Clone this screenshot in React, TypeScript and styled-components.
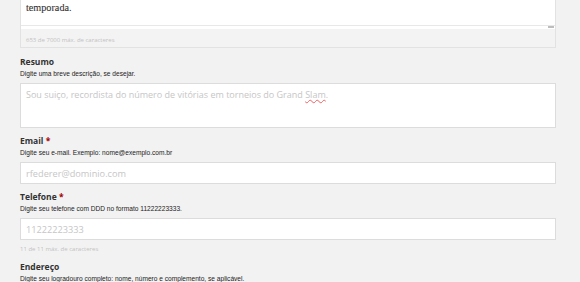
import styled, { createGlobalStyle } from "styled-components";

const GlobalStyle = createGlobalStyle`
  html, body {
    margin: 0;
    padding: 0;
    background: #f2f2f2;
  }
  * {
    box-sizing: border-box;
  }
`;

const Form = styled.form`
  width: 556px;
  padding-left: 20px;
  font-family: "Open Sans", "Liberation Sans", sans-serif;
  color: #333;
`;

const EditorPanel = styled.div`
  border: 1px solid #e2e2e2;
  border-top: none;
  background: #f3f3f3;
  margin-bottom: 8px;
`;

const EditorBody = styled.div`
  height: 25px;
  padding: 0 5px;
  background: #fff;
  overflow: hidden;
  font-family: "Liberation Serif", "DejaVu Serif", serif;
  font-size: 10.2px;
  line-height: 15px;
  color: #333;
  -webkit-text-stroke: 0.1px #333;
`;

const ResizeBar = styled.div`
  height: 4px;
  background: #fff;
  border-top: 1px solid #e8e8e8;
  display: flex;
  justify-content: flex-end;
  padding-right: 1px;
`;

const Grip = styled.span`
  width: 6px;
  height: 2px;
  background: #bdbdbd;
`;

const Counter = styled.div<{ $inset?: boolean }>`
  font-size: 6px;
  line-height: 10px;
  color: #c2c2c2;
  padding: ${(p) => (p.$inset ? "6px 5px 2px" : "0")};
  margin-top: ${(p) => (p.$inset ? "0" : "4px")};
`;

const Field = styled.div`
  margin-bottom: 7px;
`;

const Label = styled.label`
  display: block;
  font-size: 8.5px;
  font-weight: 700;
  line-height: 12px;
  margin-bottom: 1px;
  color: #333;
`;

const Required = styled.span`
  color: #a40000;
`;

const Help = styled.div`
  font-family: "Liberation Sans", Arial, sans-serif;
  font-size: 6.6px;
  line-height: 10px;
  color: #222;
  margin-bottom: 4px;
`;

const TextArea = styled.div`
  height: 45px;
  background: #fff;
  border: 1px solid #dcdcdc;
  padding: 4px 5px;
  font-size: 9px;
  line-height: 13px;
  color: #c6c6c6;
`;

const Misspelled = styled.span`
  text-decoration: underline wavy #f06060;
  text-decoration-thickness: 0.3px;
  text-underline-offset: 1px;
`;

const Input = styled.input`
  display: block;
  width: 100%;
  height: 22px;
  margin: 0;
  background: #fff;
  border: 1px solid #dcdcdc;
  border-radius: 0;
  padding: 0 5px;
  font-family: "Open Sans", sans-serif;
  font-size: 9.2px;
  color: #555;
  outline: none;
  &::placeholder {
    color: #c6c6c6;
  }
`;

export default function App() {
  return (
    <>
      <GlobalStyle />
      <Form>
        <EditorPanel>
          <EditorBody>temporada.</EditorBody>
          <ResizeBar>
            <Grip />
          </ResizeBar>
          <Counter $inset>653 de 7000 máx. de caracteres</Counter>
        </EditorPanel>

        <Field>
          <Label>Resumo</Label>
          <Help>Digite uma breve descrição, se desejar.</Help>
          <TextArea>
            Sou suiço, recordista do número de vitórias em torneios do Grand{" "}
            <Misspelled>Slam</Misspelled>.
          </TextArea>
        </Field>

        <Field>
          <Label>
            Email <Required>*</Required>
          </Label>
          <Help>Digite seu e-mail. Exemplo: nome@exemplo.com.br</Help>
          <Input placeholder="rfederer@dominio.com" />
        </Field>

        <Field>
          <Label>
            Telefone <Required>*</Required>
          </Label>
          <Help>Digite seu telefone com DDD no formato 11222223333.</Help>
          <Input placeholder="11222223333" />
          <Counter>11 de 11 máx. de caracteres</Counter>
        </Field>

        <Field>
          <Label>Endereço</Label>
          <Help>
            Digite seu logradouro completo: nome, número e complemento, se aplicável.
          </Help>
        </Field>
      </Form>
    </>
  );
}
